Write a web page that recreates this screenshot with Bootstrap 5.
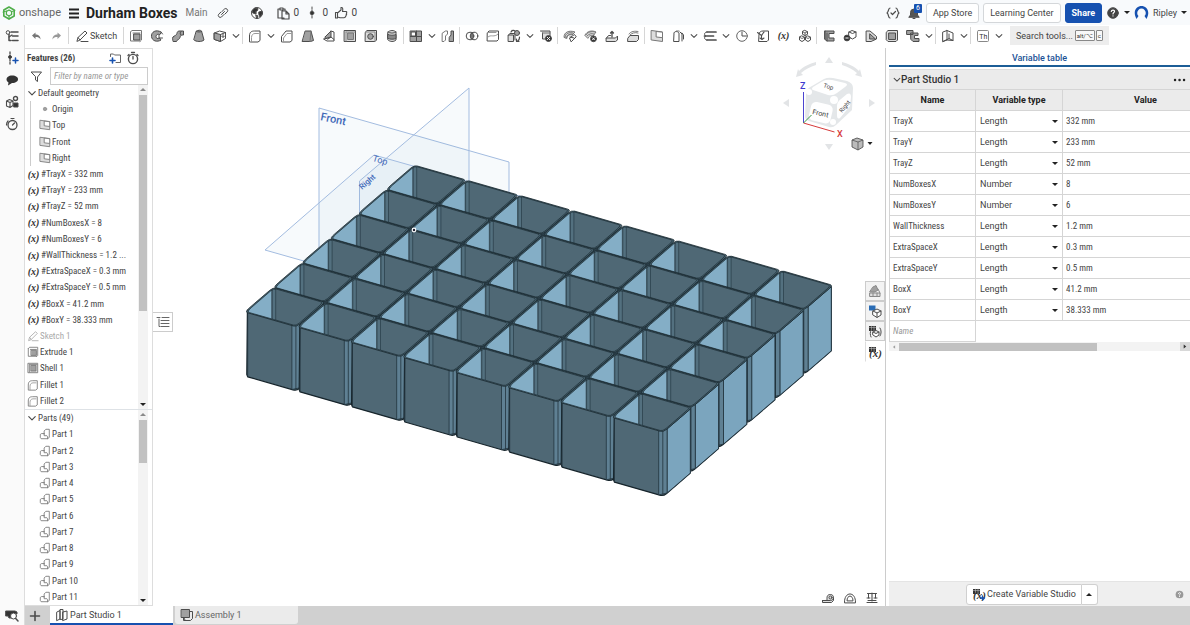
<!DOCTYPE html>
<html lang="en">
<head>
<meta charset="utf-8">
<meta name="viewport" content="width=device-width, initial-scale=1">
<title>Durham Boxes</title>
<link href="https://cdn.jsdelivr.net/npm/bootstrap@5.3.0/dist/css/bootstrap.min.css" rel="stylesheet">
<style>
body{font-family:Roboto,"Liberation Sans",sans-serif;font-size:9px;line-height:12px;color:#444;background:#fff}
button,input,select{font:inherit;color:inherit}
a{color:inherit;text-decoration:none}
.plain{border:0;background:none;padding:0;display:inline-flex;align-items:center;justify-content:center;flex:none}
.ic{width:14px;height:14px;fill:none;stroke:#4c4c4c;stroke-width:1;stroke-linejoin:round;stroke-linecap:round;flex:none;display:block}
.ic .g{fill:#a0a0a0}.ic .k{fill:#333}.ic .w{fill:#fff}.ic .b{stroke:#1651b0}.ic .lt{fill:#ddd}
.ic text{stroke:none;fill:#333}
.topbar{height:25px;background:#f8fafc;padding:0 3px 0 2px}
.brand{font-size:11px;color:#666;margin-left:3px;width:48px}
.doc-title{font-size:14px;line-height:20px;font-weight:700;color:#222;margin:0 0 0 1px}
.branch{font-size:10px;color:#777}
.cnt{font-size:10px;width:15px;padding-left:4px}
.tb-btn{height:20px;font-size:9px;line-height:12px;border:1px solid #d4d7da;background:#fff;border-radius:3px;padding:0 6px;color:#444}
.tb-share{background:#1651b0;border-color:#1651b0;color:#fff;font-weight:700}
.badge-n{left:6px;top:-2px;background:#1651b0;color:#fff;font-size:7px;line-height:9px;width:8px;border-radius:1px;text-align:center}
.caret-d{border:3px solid transparent;border-top-color:#222;border-bottom:0;width:0;height:0;flex:none}
.caret-u{border:3px solid transparent;border-bottom-color:#222;border-top:0;width:0;height:0;flex:none}
.rail{width:25px;background:#fafafa;border-right:1px solid #ddd;padding:0 0 3px}
.toolbar{height:23px;background:#fff;padding-bottom:2px}
.tool{width:21px;height:21px}
.chev{width:11px;height:21px}
.sep{width:1px;height:17px;background:#d6d6d6;margin:0 1px;flex:none}
.sketch-btn{width:44px;gap:1px;margin:0 4px}
.search{background:#ededed;height:19px;width:99px;padding:0 6px;margin-left:6px;gap:1px;color:#444}
.search .lbl{flex:1;text-align:left;white-space:nowrap}
kbd{font:6px/9px Roboto,sans-serif;background:#f8f8f8;color:#333;border:1px solid #888;padding:0 1px;border-radius:1px;white-space:nowrap}
.features{width:128px;border:1px solid #ddd;border-left:0;background:#fff;font-family:"Roboto Condensed","Liberation Sans Narrow",Roboto,sans-serif}
.panel-head{height:18px;padding:0 12px 0 2px;color:#222}
.panel-title{font-size:9px;line-height:12px;font-weight:700;color:#444;margin:0}
.filter{height:18px;width:98px;border:1px solid #ccc;border-radius:0;padding:0 3px;font-style:italic;min-width:0}
::placeholder{color:#999;opacity:1}
.list{padding:0;margin:0;list-style:none;min-height:0;overflow:hidden}
.list li{flex:1 1 0;min-height:16px;display:flex;align-items:center;white-space:nowrap;gap:1px;padding-left:2px}
.list li.sub{padding-left:14px}
.list .ic{width:12px;height:12px}
.list .soft .ic,.list .sub .ic{stroke:#777}
.guide{border-left:1px solid #ccc;margin-left:5px}
.list .guide li{padding-left:8px}
.off{color:#aaa}.off .ic{stroke:#aaa}
.xvar{font:italic bold 10px "Liberation Serif",serif;color:#333;width:13px;text-align:center}
.sb{width:10px;background:#f3f3f3;margin-right:4px;padding:3px 1px}
.thumb{background:#c1c1c1}
.canvas{background:#fff;min-width:0;overflow:hidden}
.flyout{left:0;top:264px;width:20px;height:20px;border:1px solid #ccc;border-left:0;background:#fff}
.cube{right:4px;top:6px}
.side-tabs{right:0;top:233px;width:20px}
.side-tabs button{height:20px;border:1px solid #ccc;background:#f3f3f3;width:20px}
.side-tabs button:last-child{background:#fff;border-color:#fff #fff #fff #ddd;height:21px}
.measure{right:6px;bottom:1px;gap:8px}
.vars{width:305px;border-left:1px solid #ccc;background:#fff;padding-left:3px}
.vtab{height:19px;border-bottom:2px solid #1c5d96;color:#1c5296;text-align:center;padding-top:4px;font-weight:500;margin-bottom:2px}
.studio{height:20px;background:#ebebeb;font-size:10px;font-weight:500;color:#333;padding:0 4px;border-top:1px solid #ddd}
.vt{width:340px;table-layout:fixed;margin:0;border-collapse:collapse}
.vt th{height:21px;background:#ebebeb;border:1px solid #d5d5d5;padding:0;text-align:center;font-weight:700;color:#222;font-size:9px}
.vt td{height:21px;border:1px solid #d5d5d5;padding:0 4px}
.vt td.nm,.vt td.vl{font-family:"Roboto Condensed","Liberation Sans Narrow",Roboto,sans-serif;padding-left:3px}
.vt select{appearance:none;border:0;background:transparent;width:100%;height:18px;padding:0;display:block;font-size:9px}
.vt .pick{position:relative;display:block}
.vt .pick .caret-d{position:absolute;right:0;top:8px;pointer-events:none}
.vt .newvar{border:0;width:100%;padding:0;font-style:italic;background:none;display:block}
.vt tr:last-child td+td{border-right:0;border-bottom:0}
.hbar{height:9px;background:#f3f3f3}
.hbar .thumb{height:8px;width:198px}
.hbar .end{width:10px;height:9px;background:#d8d8d8}
.vfoot{height:25px;background:#efefef;border-top:1px solid #e4e4e4;padding:0 6px 0 0}
.cvs{height:21px;border:1px solid #d0d0d0;background:#fff;border-radius:3px 0 0 3px;padding:0 5px;gap:1px}
.cvs-more{height:21px;width:16px;border:1px solid #d0d0d0;border-left:0;background:#fff;border-radius:0 3px 3px 0}
.tabs{height:19px;background:#d0d0d0;gap:2px}
.add-tab{width:23px;padding-right:3px}
.tabs a{width:123px;padding-left:5px;gap:1px;height:18px;background:#ebebeb;border-radius:0 0 3px 3px;color:#666}
.tabs a.on{background:#fff;border-bottom:2px solid #1651b0;color:#444;border-radius:0;height:19px}
</style>
</head>
<body class="vh-100 d-flex flex-column overflow-hidden">
<header class="topbar d-flex align-items-center flex-shrink-0">
  <a href="#" class="d-flex align-items-center"><svg class="ic" viewBox="0 0 14 14" style="stroke:#4fae4a"><path d="M7 1l5.200 3v6L7 13l-5.200-3V4z" stroke-width="1.600"/><path d="M7 4l2.600 1.500v3L7 10 4.400 8.500v-3z" stroke-width="1.300"/><path d="M10 5.500l3-1M1 6l3.500-1M7 10v3"/></svg><span class="brand">onshape</span></a>
  <button class="plain me-1" aria-label="Menu"><svg class="ic" viewBox="0 0 14 14"><path d="M2 3.500h10M2 7.500h10M2 11.500h10" stroke="#222" stroke-width="1.900" stroke-linecap="butt"/></svg></button>
  <h1 class="doc-title">Durham Boxes</h1><span class="branch ms-1 ps-1">Main</span>
  <button class="plain ms-2" aria-label="Link"><svg class="ic" viewBox="0 0 14 14"><path d="M5.500 8.500l3-3M6 5.500L8.500 3a2 2 0 0 1 2.800 2.800L9 8M8 8.500L5.500 11a2 2 0 0 1-2.800-2.800L5 6"/></svg></button>
  <span class="plain ms-3 me-1 ps-1"><svg class="ic" viewBox="0 0 14 14"><circle cx="7" cy="7" r="5.500" class="w"/><path class="k" d="M2 5l3-3 3 .5-.5 2L5.500 6l1 1-1 1L3 7zM9 6l3-1 .3 3L10 11 9 9zM6 9l2 1-1 2.500z"/></svg></span>
  <button class="plain ms-2" aria-label="Copies"><svg class="ic" viewBox="0 0 14 14"><path d="M8 12H2V3h2M7 3h2v1M4 2h3v2H4zM6 5h4l3 3v5H6zM10 5v3h3" stroke-width="1.200"/></svg></button><span class="cnt">0</span>
  <button class="plain" aria-label="Versions"><svg class="ic" viewBox="0 0 14 14"><path d="M7 1v12" stroke-dasharray="2 1"/><circle cx="7" cy="7" r="1.800" class="k"/></svg></button><span class="cnt">0</span>
  <button class="plain" aria-label="Like"><svg class="ic" viewBox="0 0 14 14"><path d="M1.500 6.500h2V12h-2zM3.500 7L7 4V1.500c2-.5 2 2 1.500 4H12c1 0 1 1 .3 1.600.7.600.4 1.400-.2 1.700.3.700 0 1.300-.6 1.500 0 1-.5 1.400-1.500 1.400H6L3.500 11" stroke-width="1.100"/></svg></button><span class="cnt">0</span>
  <div class="d-flex align-items-center ms-auto">
    <button class="plain me-2" aria-label="Custom features"><svg class="ic" viewBox="0 0 14 14"><path d="M4 2C2 2 3 6 1 7c2 1 1 5 3 5M10 2c2 0 1 4 3 5-2 1-1 5-3 5M5 7l1.500 1.500L9.500 5.500" stroke-width="1.200"/></svg></button>
    <button class="plain position-relative me-1" aria-label="Notifications"><svg class="ic" viewBox="0 0 14 14"><path d="M1 11l1.500-2V6.500a3.500 3.500 0 0 1 7 0V9l1.500 2zM5 12.500h2" fill="#555"/></svg><span class="badge-n position-absolute">6</span></button>
    <button class="tb-btn">App Store</button>
    <button class="tb-btn mx-1">Learning Center</button>
    <button class="tb-btn tb-share me-1">Share</button>
    <button class="plain gap-1 me-1" aria-label="Help"><svg class="ic" viewBox="0 0 14 14"><circle cx="7" cy="7" r="5.300" fill="#444"/><path d="M5.300 5.500c.2-2 3.500-1.800 3.200 0C8.400 6.600 7 6.500 7 8M7 9.800v.2" stroke="#fff" stroke-width="1.200"/></svg><span class="caret-d"></span></button>
    <button class="plain gap-1"><svg width="15" height="15" viewBox="0 0 15 15"><path d="M2.500 14C-2 6 3 1 7.500 1S17 6 12.500 14L10.500 11a4.300 4.300 0 1 0-6 0z" fill="#1651b0"/></svg>Ripley<span class="caret-d"></span></button>
  </div>
</header>
<div class="d-flex flex-grow-1" style="min-height:0">
  <nav class="rail d-flex flex-column align-items-center flex-shrink-0" id="rail"></nav>
  <div class="d-flex flex-column flex-grow-1" style="min-width:0">
    <div class="toolbar d-flex align-items-center flex-shrink-0" id="toolbar"></div>
    <div class="d-flex flex-grow-1" style="min-height:0">
      <aside class="features d-flex flex-column flex-shrink-0">
        <div class="panel-head d-flex align-items-center gap-1"><h2 class="panel-title me-auto">Features (26)</h2>
          <button class="plain" aria-label="Add folder"><svg class="ic" viewBox="0 0 14 14"><path d="M2.500 5.500V3h3l1 1h6v7.500H8" stroke="#666"/><path class="b" d="M4.500 7v5M2 9.500h5" stroke-width="1.600"/></svg></button>
          <button class="plain" aria-label="Timing"><svg class="ic" viewBox="0 0 14 14"><circle cx="7" cy="8" r="4.600" stroke-width="1.400"/><path d="M7 8V5.500M5.500 1.500h3M11 3.500l1 1M3 3.500l-1 1" stroke-width="1.300"/></svg></button></div>
        <div class="d-flex align-items-center gap-1 ps-1 pe-1"><svg class="ic" viewBox="0 0 14 14"><path d="M2.500 3h10L8.500 8v4.500L6.500 11V8z"/></svg><input class="filter ms-auto" aria-label="Filter" placeholder="Filter by name or type"></div>
        <div class="d-flex" style="flex:322 1 0;min-height:0">
          <ul class="list d-flex flex-column flex-grow-1" id="features"></ul>
          <div class="sb d-flex flex-column align-items-center"><span class="caret-u opacity-50"></span><div class="thumb w-100 mt-1" style="height:68%"></div><span class="caret-d mt-auto"></span></div>
        </div>
        <div class="d-flex border-top" style="flex:194 1 0;min-height:0">
          <ul class="list d-flex flex-column flex-grow-1" id="parts"></ul>
          <div class="sb d-flex flex-column align-items-center"><span class="caret-u opacity-50"></span><div class="thumb w-100 mt-1" style="height:23%"></div><span class="caret-d mt-auto"></span></div>
        </div>
      </aside>
      <main class="canvas position-relative flex-grow-1">
        <svg class="w-100 h-100 d-block" viewBox="153 48 732 558" id="scene" role="img" aria-label="Tray of 48 boxes"></svg>
        <button class="plain flyout position-absolute" aria-label="Feature list"><svg class="ic" viewBox="0 0 14 14"><path d="M1 2.500h3M6 2.500h7M5 5.500h8M5 8.500h8M5 11.500h8M3 4v7.500h1" stroke="#666"/></svg></button>
        <svg class="cube position-absolute" width="100" height="100" viewBox="781 54 100 100">
          <g fill="#e2e4e6"><path d="M829 57l4 6h-8zM829 150l-4-6h8zM783 103l6-4v8zM875 103l-6-4v8zM796 77l2-8 1 2c5-5 10-7 17-9v3c-6 2-10 4-15 8l2 2zM862 77l-2-8-1 2c-5-5-10-7-17-9v3c6 2 10 4 15 8l-2 2z"/></g>
          <path d="M806 94q1-6 6-8l12-7q4-2 9-1l14 3q6 2 6 7l-1 22-16 15q-3 3-7 2l-20-6q-4-1-4-5z" fill="#e4e7e9"/>
          <g fill="#fff"><path d="M813 90q-2-1 0-3l10-6q4-2 9-1l13 3q4 1 0 4l-8 6q-4 3-9 2z"/><rect x="-10" y="-9" width="22" height="19" rx="5" transform="translate(820 112) rotate(13)"/><path d="M837 106q0-4 4-7l6-5q4-2 4 3l-1 9-10 12q-3 2-3-3z"/><circle cx="809" cy="92" r="3"/><circle cx="834" cy="100" r="4"/><circle cx="833" cy="122" r="3"/></g>
          <g font-size="7" fill="#444"><text x="812" y="114" transform="rotate(12 812 114)">Front</text><text x="823" y="87" font-size="6" transform="rotate(18 823 87)">Top</text><text x="842" y="113" font-size="6" transform="rotate(-50 842 113)">Right</text></g>
          <path d="M803.500 123V92" stroke="#4a44d0" fill="none"/><path d="M803.500 123l31 9" stroke="#d63a3a"/><path d="M803.500 123l8-8" stroke="#3a9a4a"/>
          <text x="800" y="89" font-size="9" font-weight="500" fill="#3d3ad0">Z</text><text x="837" y="137" font-size="9" font-weight="500" fill="#d63a3a">X</text>
          <path d="M852 140l5-2 6 2v7l-5 3-6-3z" fill="#bbb" stroke="#444" stroke-width=".8"/><path d="M852 140l6 2 5-2M858 142v8" stroke="#555" fill="none" stroke-width=".8"/><path d="M867.500 142h5l-2.500 3z" fill="#222"/>
        </svg>
        <div class="side-tabs position-absolute d-flex flex-column" id="side"></div>
        <div class="measure position-absolute d-flex" id="measure"></div>
      </main>
      <aside class="vars d-flex flex-column flex-shrink-0">
        <div class="vtab">Variable table</div>
        <div class="overflow-hidden">
          <div class="studio d-flex align-items-center"><svg class="ic" viewBox="0 0 14 14" style="width:8px;height:8px"><path d="M2 4l5 5 5-5" stroke-width="1.800"/></svg>Part Studio 1<button class="plain ms-auto" aria-label="More"><svg class="ic" viewBox="0 0 14 14"><path d="M3 7h.1M7.500 7h.1M12 7h.1" stroke="#222" stroke-width="2.400"/></svg></button></div>
          <table class="vt"><colgroup><col style="width:86px"><col style="width:87px"><col></colgroup><thead><tr><th>Name</th><th>Variable type</th><th>Value</th></tr></thead><tbody id="vars"></tbody></table>
        </div>
        <div class="hbar d-flex align-items-center"><svg class="ic" viewBox="0 0 14 14" style="width:10px;height:8px"><path class="g" stroke="none" d="M9 4v6L5 7z"/></svg><div class="thumb"></div><div class="end ms-auto"><svg class="ic" viewBox="0 0 14 14" style="width:10px;height:9px"><path class="k" stroke="none" d="M5 4v6l4-3z"/></svg></div></div>
        <div class="vfoot mt-auto d-flex align-items-center"><div class="d-flex mx-auto"><button class="cvs d-flex align-items-center" id="cvs"></button><button class="cvs-more plain" aria-label="More"><span class="caret-u"></span></button></div><svg class="ic" viewBox="0 0 14 14" style="width:9px;height:9px"><circle cx="7" cy="7" r="6" fill="#999" stroke="none"/><path d="M5.300 5.500c.2-2 3.500-1.800 3.200 0C8.400 6.600 7 6.500 7 8M7 10v.2" stroke="#fff" stroke-width="1.400"/></svg></div>
      </aside>
    </div>
    <div class="tabs d-flex flex-shrink-0" id="tabs"></div>
  </div>
</div>
<script src="https://cdn.jsdelivr.net/npm/bootstrap@5.3.0/dist/js/bootstrap.bundle.min.js"></script>
<script>
const I={
undo:'<path d="M3 6.500l3.500-3v2c3 0 5 1.500 5 5-1-2-2.500-2.500-5-2.500v2z" fill="#777" stroke="none"/>',
redo:'<path d="M11 6.500l-3.500-3v2c-3 0-5 1.500-5 5 1-2 2.500-2.500 5-2.500v2z" fill="#999" stroke="none"/>',
pencil:'<path d="M2 12l1-3.500L10 2l2 2-7 7zM3 8.500L5 11"/><path d="M6 12.500h7"/>',
extrude:'<path d="M1.500 3V12H11M1.500 3L3 1.500h9.500V11L11 12.500M4 4h7" stroke="#777"/><path class="g" d="M5 5h6v6H5z"/>',
revolve:'<path class="g" d="M11 3C6 0 1 3 1.500 7.500S7 13.500 11 11L9.500 9C7.500 10 6 9.500 6 7.500S8 4.800 9.500 5.500z"/><path d="M9 6v3h3.500M11 3l1.500 2"/>',
sweep:'<path class="g" d="M1.500 9c0-2 3-2 4-3.500S5.500 2 9 2h3.500v4H11c-2 0-1.500 2-2.500 3.500S6 10.500 5.500 12.500h-3z"/><path d="M10 2.500c-1 1-1 2-.5 3"/>',
loft:'<path class="g" d="M4.500 2c2-1 4-1 5 0l2.500 9c-2 2-8 2-10 0z"/><path d="M4.500 2.500c1 .7 4 .7 5 0"/>',
thicken:'<path class="w" d="M1.500 4l5-2 6 1.500v6l-5 3-6-2z"/><path class="g" d="M1.500 4l6 1.500v7l-6-2z"/><path d="M7.500 5.500l5-2M10 5v3M8.500 7L10 8.500 11.500 7"/>',
fillet:'<path d="M1.500 12.500V7c0-4 2-5 5-5h5.500v9.500L10 13H3z"/><path d="M3.500 12.500V8.500C3.500 6 5 4.500 7 4.500h3.500" stroke="#999"/>',
chamfer:'<path d="M1.500 12.500V7.500L6 2h6v9.500L10 13H3z"/><path d="M3.500 12.500V9L7 4.500h4" stroke="#999"/>',
draft:'<path class="g" d="M4.500 2h5.500l2.500 9.500-3 1H1.500z"/><path d="M10 2l-1 10.500" stroke="#777"/>',
rib:'<path class="g" d="M3 8l6-6v6l-3 2z"/><path d="M9 2l3 1v9H5l-3.500-2L9 8l3 2.500"/>',
shell:'<path class="lt" d="M1.500 1.500h11v11h-11z"/><path d="M3 3v9M3 3h9" stroke="#888"/><path d="M5 4h5.500v6.500H5z" fill="#a0a0a0" stroke="#777"/>',
hole:'<path class="lt" d="M1.500 3L3 1.500h9.500V11L11 12.500H1.500z"/><circle class="g" cx="6.500" cy="7.500" r="2.800"/><path d="M1.500 3h9.500v9.500" stroke="#888"/>',
thread:'<path class="lt" d="M3 3c2-2 6-2 8 0v8c-2 2-6 2-8 0z"/><path d="M3 5.500c2 1 6 1 8 0v4c-2 1-6 1-8 0z" fill="#888"/><path d="M3 3c2 1.500 6 1.500 8 0"/>',
pattern:'<path class="g" d="M1.500 2h11v10.500h-11z"/><path class="w" d="M2.500 3h4v4h-4z"/><path d="M7.500 2v10.500M1.500 7.500h11"/>',
mirror:'<path d="M1.500 4l3-2h2v3L4.500 7v4L3 12.500H1.500z" stroke="#777"/><path class="g" d="M8.500 8L10 6V2h2.500v10.500h-4z"/>',
bool:'<circle cx="5" cy="7" r="3.800"/><circle cx="9" cy="7" r="3.800"/><path class="g" d="M7 4c1.500 1.500 1.500 4.500 0 6-1.500-1.500-1.500-4.500 0-6z"/>',
split:'<path class="w" d="M1.500 3.500L3 2h9.500v8.500L11 12H1.500z"/><path d="M1.500 3.500H10M2 8c3-3 6 1 10-3" stroke="#999"/>',
transform:'<path class="lt" d="M1.500 6h5v6.500h-5zM1.500 6L3 4.500h5v6.500"/><circle class="g" cx="10" cy="4" r="2.500"/><path d="M4 3c1-2 3-2 4-1M12.500 8c0 2-1 4-3 4.500M9.500 10v2.500H12M5 1.500L4 3" stroke-width="1.200"/>',
delpart:'<path class="lt" d="M1.500 2h9.500v8H3.500V4"/><path d="M3.500 4H11" stroke="#777"/><circle class="k" cx="9.500" cy="9.500" r="3"/><path d="M8.400 8.400l2.200 2.200M10.600 8.400l-2.200 2.200" stroke="#fff"/>',
modfil:'<path class="lt" d="M1 8c0-5 5-7 11-5L9 6c-3-1-5 1-5 3z" stroke="#777"/><path d="M2 8c1-4 4-5 8-4M3 9c1-3 3-4 6-4" stroke="#777"/><path d="M8 12.500L6.500 9l5-3.500 1.500 2zM7 8l4 1"/>',
delface:'<path class="lt" d="M1 6c2-4 7-5 11-3l-3 4c-3-1-4 0-5 2z" stroke="#777"/><path d="M2 6c2-3 5-4 9-3M3 7c2-2 4-3 7-2" stroke="#777"/><circle class="k" cx="9.500" cy="9.800" r="2.900"/><path d="M8.500 8.800l2 2M10.500 8.800l-2 2" stroke="#fff"/>',
moveface:'<path class="lt" d="M1.500 9h9l2-2v4l-2 1.500h-9zM1.500 9l2-2.500h2"/><path d="M7 8V2.500M5.500 4L7 2.500 8.500 4" stroke-width="1.300"/>',
replace:'<path class="lt" d="M2 9l2-2.500h8.500v4L10.500 12.500H2z"/><path d="M3 5c2-3 6-3 9-2.500M4 6c2-2 5-3 8-2" stroke="#777"/>',
plane:'<path class="lt" d="M1.500 1.500L12.500 3v9.500L1.500 11z" stroke="#777"/><path class="w" d="M6.500 2.500l6 .7v5.500L6.500 8z" stroke="#777"/>',
frame:'<path d="M3 4c0-2 4-2 5 0v8.500H3zM9 3l2 2v7M11 4l1.500 2v4"/><path d="M3 4l2-2h3" stroke="#777"/>',
curves:'<path d="M4 3h9M1.500 7h9M4 11h9" stroke-width="1.700"/><path d="M4 3C1 3 1 6 2.500 7M4 11C1 11 1 8 2.500 7"/>',
clock:'<circle cx="7" cy="7" r="5.300" stroke="#666"/><path d="M7 3v4h4"/>',
derive:'<path class="w" d="M3 5c0-2 2-3 4-3h5.500v9L11 12.500H3z"/><path d="M6 10c-2-4 1-5 2-7M1.500 3.500l4 3M4 9l2 1.500L8 9" stroke-width="1.100"/>',
cubes:'<path class="w" d="M7 1.500l2.500 1.200v2.600L7 6.500 4.500 5.300V2.700zM4 7l2.500 1.200v2.800L4 12.500 1.500 11V8.200zM10 7l2.500 1.200v2.800L10 12.500 7.500 11V8.200z"/><path d="M4.500 2.700L7 4l2.500-1.300M7 4v2.500M1.500 8.200L4 9.500l2.500-1.300M7.500 8.200L10 9.500l2.500-1.300" stroke-width=".8"/>',
sm1:'<path class="g" d="M3 2h9v2.500H7V9h5v3H5L3 10.500z"/><path d="M3 2v8M5 4v8"/>',
sm2:'<path class="w" d="M6 3l3-1.500 4 1.500v5L9.500 10 6 8zM6 3l3.500 1.500L13 3"/><circle class="k" cx="4" cy="9" r="2.900"/><path d="M2.800 9h2.400" stroke="#fff"/>',
sm3:'<path class="lt" d="M2.500 2H6l6.500 5.500V10L7 12.500H2.500z"/><path class="g" d="M6 5l5.500 5H6z"/>',
sm4:'<path class="lt" d="M1.500 3L3 1.500h9.500V11L11 12.500H3L1.500 11z"/><path class="g" d="M4 4h6.500v6.500H4z"/>',
sm5:'<path class="g" d="M1 1.500h6v4H1zM5 4h7v2.500H8.500v3H13v3H7L5 10.500z"/>',
frm:'<path d="M2 3l4-1.500V11L2 12.500zM6 1.500L12 4v7.500L8 9.500V5M2 12.500L8 9.500M6 11l6 .5"/>',
th:'<rect x="1.500" y="1.500" width="11" height="11" rx="1" stroke="#888"/><text x="3.300" y="9.500" font-size="7">Th</text>',
tree:'<path d="M6 3h7M7.500 7H13M7.500 11.500H13M4 5v6.500h2" stroke-width="1.500"/><circle class="w" cx="3" cy="3.500" r="1.800"/><path d="M4 8l3-2" stroke-width="1.200"/>',
addv:'<path d="M5 1v12" stroke-dasharray="2 1.500" stroke-width="1.300"/><circle class="k" cx="5" cy="6" r="1.500"/><path class="b" d="M10.500 7v5M8 9.500h5" stroke-width="1.500"/>',
chat:'<path class="k" d="M7 2.500c8 0 8 7.500 0 7.500L3 12.500 3.500 9.500C-.5 7 2 2.500 7 2.500z" stroke="none"/>',
cfg:'<path d="M1.500 6l3-1.500L8 6v4.500L5 12.500 1.500 11zM1.500 6l3.500 1.500L8 6M5 7.500v5" stroke-width="1.100"/><circle cx="10.500" cy="3.500" r="2" class="w" stroke-width="1.400"/><path class="k" d="M9 8h4v4H9z"/>',
timer:'<circle cx="7.500" cy="8" r="4.500" stroke-width="1.300"/><path d="M7.500 8l2-2M6 1.500h3M1.500 8c0-2 .5-3 1.500-4" stroke-width="1.200"/>',
find:'<path class="k" d="M1 3h9l2 1v2H7v4H4l-1-2H1z"/><circle class="w" cx="8.500" cy="8" r="3"/><path d="M10.700 10.500L13 13" stroke-width="1.500"/>',
part:'<path d="M6 7V3.500L8 1.500h4V11l-2 1.500H2.500L1.500 11V7.500L3 6.500h3M6 7v2h3M10 12.500V10"/>',
studio:'<path d="M2 4l3-1.500V11L2 12.500zM5 11V1.500h3V11zM8 4l4-1v8l-4 1.500z"/>',
asm:'<path class="g" d="M1.500 1.500h8v8h-8z"/><path d="M3.500 9.500V12.500h7l2-2V3.500H9.500M5 12l-1-2"/>',
sheet:'<path class="k" d="M1 2h7v5H1z" stroke="none"/><path d="M1 3.500h7M3.500 2v5M6 2v5" stroke="#ccc" stroke-width=".5"/>',
tape:'<path class="lt" d="M1.500 9.500h8c4 0 4-6 0-6S6 6.500 6 9M1.500 9.500v2h9l2-2V7"/><circle cx="9.500" cy="6.500" r="1.500"/>',
prot:'<path d="M1.500 11.500C1 0 13 0 12.500 11.500zM4 9.500c0-6 6-6 6 0z"/>',
scale:'<path d="M7 2v8M2.500 2.500h9M2 11.500h10M3 9.500h8" stroke-width="1.100"/><path d="M3.500 3v4M10.500 3v4M2 7h3M9 7h3"/>'
};
const ic=n=>`<svg class="ic" viewBox="0 0 14 14" aria-hidden="true">${I[n]}</svg>`;
const xv='<span class="xvar">(x)</span>';
const $=id=>document.getElementById(id);
const chev='<button class="plain chev" aria-label="More"><svg class="ic" viewBox="0 0 14 14" style="width:8px;height:8px"><path d="M2 4.500l5 5 5-5" stroke-width="1.800"/></svg></button>';
const tool=n=>`<button class="plain tool" aria-label="${n}">${n==='var'?xv:ic(n)}</button>`;
const sep='<span class="sep"></span>';
$('toolbar').innerHTML=tool('undo')+tool('redo')+sep+`<button class="plain sketch-btn">${ic('pencil')}Sketch</button>`+sep+
'extrude revolve sweep loft thicken v | fillet v chamfer draft rib shell hole thread | pattern v mirror | bool split transform v delpart | modfil delface moveface replace | plane frame v curves v clock derive var cubes | sm1 sm2 sm3 sm4 sm5 v | frm v | th v'
.split(' ').map(t=>t==='v'?chev:t==='|'?sep:tool(t)).join('')+
'<button class="plain search"><span class="lbl">Search tools...</span><kbd>alt/⌥</kbd><kbd>c</kbd></button>';
$('rail').innerHTML=['tree','addv','chat','cfg','timer'].map(n=>`<button class="plain" style="height:22px" aria-label="${n}">${ic(n)}</button>`).join('')+`<button class="plain mt-auto" aria-label="find">${ic('find')}</button>`;
const li=(icon,t,c='')=>`<li class="${c}">${icon}<span>${t}</span></li>`;
const arrow='<svg class="ic" viewBox="0 0 14 14" style="width:10px;height:9px"><path d="M2 4l5 5 5-5" stroke-width="1.800"/></svg>';
const dot='<svg class="ic" viewBox="0 0 14 14"><circle cx="7" cy="7" r="2" class="g" stroke="#999"/></svg>';
const vars=[['TrayX','Length','332 mm'],['TrayY','Length','233 mm'],['TrayZ','Length','52 mm'],['NumBoxesX','Number','8'],['NumBoxesY','Number','6'],['WallThickness','Length','1.2 mm'],['ExtraSpaceX','Length','0.3 mm'],['ExtraSpaceY','Length','0.5 mm'],['BoxX','Length','41.2 mm'],['BoxY','Length','38.333 mm']];
$('features').innerHTML=li(arrow,'Default geometry')+'<li style="flex:4 1 0;padding:0"><ul class="list guide d-flex flex-column h-100 w-100">'+li(dot,'Origin')+li(ic('plane'),'Top')+li(ic('plane'),'Front')+li(ic('plane'),'Right')+'</ul></li>'+
vars.map(v=>li(xv,`#${v[0]} = ${v[0]==='WallThickness'?'1.2 ...':v[2]}`)).join('')+li(ic('pencil'),'Sketch 1','off')+li(ic('extrude'),'Extrude 1','soft')+li(ic('shell'),'Shell 1','soft')+li(ic('fillet'),'Fillet 1','soft')+li(ic('fillet'),'Fillet 2','soft');
$('parts').innerHTML=li(arrow,'Parts (49)')+Array.from({length:11},(_,k)=>li(ic('part'),'Part '+(k+1),'sub')).join('');
$('vars').innerHTML=vars.map(v=>`<tr><td class="nm">${v[0]}</td><td><span class="pick"><select aria-label="${v[0]} type"><option>${v[1]}</option></select><span class="caret-d"></span></span></td><td class="vl">${v[2]}</td></tr>`).join('')+'<tr><td class="nm"><input class="newvar" aria-label="Name" placeholder="Name"></td><td colspan="2"></td></tr>';
const vx=`<svg class="ic" viewBox="0 0 14 14">${I.sheet}<text x="1" y="12" font-size="11" font-weight="700" font-style="italic" font-family="Liberation Serif">(x)</text></svg>`;
const vxAdd=vx.replace('</svg>','<path class="b" d="M10.500 9v4M8.500 11h4" stroke-width="1.300"/></svg>');
$('side').innerHTML=[`<svg class="ic" viewBox="0 0 14 14"><path class="g" d="M5 3l3-1.500L10 6 7 8H2z" stroke="#888"/><path class="lt" d="M2 9h10v3.500H2zM5 9v3.500M9 9v3.500M10 5l2 4" stroke="#888"/></svg>`,
`<svg class="ic" viewBox="0 0 14 14"><path d="M1 1.500h6.500v5H1z" fill="#2a6cb5" stroke="none"/><path class="w" d="M5 7l4-2 4 2v4l-4 2.500L5 11zM5 7l4 2 4-2M9 9v4"/></svg>`,
`<svg class="ic" viewBox="0 0 14 14">${I.sheet}<path class="w" d="M5 8l3-1.500L11 8v3l-3 2-3-2zM5 8l3 1.500L11 8"/><path d="M3 6c-1 2-1 5 0 7M12 4c1.500 2 1.500 6 0 8"/></svg>`,vx].map(s=>`<button class="plain" aria-label="Panel">${s}</button>`).join('');
$('measure').innerHTML=['tape','prot','scale'].map(n=>`<button class="plain" aria-label="${n}">${ic(n)}</button>`).join('');
$('cvs').innerHTML=vxAdd+'Create Variable Studio';
$('tabs').innerHTML=`<button class="plain add-tab" aria-label="Add tab"><svg class="ic" viewBox="0 0 14 14"><path d="M7 2.500v9M2.500 7h9" stroke-width="1.600"/></svg></button><a href="#" class="on d-flex align-items-center">${ic('studio')}Part Studio 1</a><a href="#" class="d-flex align-items-center">${ic('asm')}Assembly 1</a>`;

/* Tray model: 8 x 6 open boxes in axonometric projection */
const U=[52,14.9],V=[-28.6,24.6],H=64;
const ptAt=(A,u,v,h=0)=>[A[0]+U[0]*u+V[0]*v,A[1]+U[1]*u+V[1]*v+h];
const S=p=>p.map(n=>n.toFixed(1)).join(' ');
function ring(A,i,ru,rv){const a=i,b=1-i,P=(u,v)=>S(ptAt(A,u,v));
 return `M${P(a+ru,a)}L${P(b-ru,a)}Q${P(b,a)} ${P(b,a+rv)}L${P(b,b-rv)}Q${P(b,b)} ${P(b-ru,b)}L${P(a+ru,b)}Q${P(a,b)} ${P(a,b-rv*1.6)}L${P(a,a+rv)}Q${P(a,a)} ${P(a+ru,a)}Z`;}
const poly=(pts,f,s='none')=>`<path d="M${pts.map(S).join('L')}Z" fill="${f}" stroke="${s}"/>`;
const vline=(p,h)=>`<path d="M${S(p)}v${h}" stroke="#22343d"/>`;
const O=[414.2,165.1],cell=(i,j)=>[O[0]+52.4*i-28.2*j,O[1]+15.05*i+24.45*j];
let g='<g fill="#7fa6cf" fill-opacity=".06" stroke="#a3bce0"><path d="M319 108L509 162V300H319z"/><path d="M469 88L359.500 181V320L469 230z"/><path d="M374 155L265 250L420 294L530 199z"/></g>'+
'<g fill="#3f68b8" stroke="none"><text x="320" y="120" font-size="11" font-weight="500" transform="rotate(12 320 120)">Front</text><text x="372" y="161" font-size="9" transform="rotate(16 372 161)">Top</text><text x="362" y="190" font-size="8" font-weight="500" transform="rotate(-41 362 190)">Right</text></g><g stroke-width=".8" stroke-linejoin="round" fill="none">';
g+=poly([ptAt(cell(0,0),.1,.1),ptAt(cell(7,0),.9,.1),ptAt(cell(7,5),.9,.9),ptAt(cell(0,5),.1,.9)],'#2b3f4a');
let defs='';
for(let j=0;j<6;j++)for(let i=0;i<8;i++){
 const A=cell(i,j),p=(u,v,h)=>ptAt(A,u,v,h);
 if(j===5||i===7){
  g+=`<path d="M${S(p(.01,.92))}L${S(p(.01,.94,H))}L${S(p(.06,1,H))}L${S(p(.93,1,H))}Q${S(p(1,1,H))} ${S(p(1,.9,H))}L${S(p(1,.06,H))}L${S(p(1,.06))}L${S(p(.5,.5))}Z" fill="#4f6875" stroke="#16242b" stroke-width="1.200"/>`;
  g+=poly([p(1,.87),p(1,.06),p(1,.06,H),p(1,.87,H)],'#7ba5be','#22343d');
  g+=poly([p(.91,1),p(1,.87),p(1,.87,H),p(.91,1,H)],'#5f8093','#22343d');
  g+=vline(p(.06,1),H)+vline(p(.96,.95),H);
 }
 g+=`<path d="${ring(A,0,.06,.12)}" fill="#4a6674" stroke="#1a2930" stroke-width=".8"/>`;
 const q=ring(A,.025,.05,.11);defs+=`<clipPath id="o${i}${j}"><path d="${q}"/></clipPath>`;
 const ax=A[0]+1,y=A[1]-4;
 g+=`<g clip-path="url(#o${i}${j})"><path d="M${ax-34} ${y}h36v60h-36z" fill="#84aec6"/><path d="M${ax-3} ${y}h60v60h-60z" fill="#4f6875"/><path d="M${ax-2} ${y}h3.500v60h-3.500z" fill="#53707f"/><path d="M${ax-2} ${y}v60M${ax+1.500} ${y}v60" stroke="#2c414c" stroke-width=".8"/></g><path d="${q}" stroke="#1a2930" stroke-width=".7"/>`;
}
g+='</g><circle cx="414" cy="230" r="1.800" fill="#223" stroke="#fff" stroke-width="1.200"/>';
$('scene').innerHTML='<defs>'+defs+'</defs>'+g;
</script>
</body>
</html>
